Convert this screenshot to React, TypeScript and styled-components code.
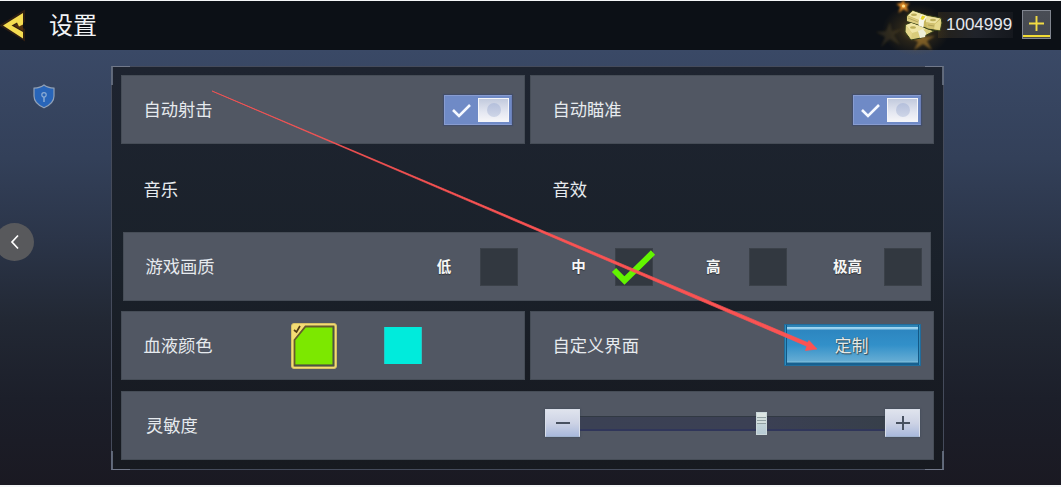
import {ReactNode} from "react";
import styled, {createGlobalStyle} from "styled-components";

const GlobalStyle = createGlobalStyle`
    * {
        box-sizing: border-box;
    }

    body {
        margin: 0;
        background: #fff;
        overflow: hidden;
    }

    svg {
        display: block;
        overflow: visible;
        flex: none;
    }
`;

const Screen = styled.div`
    position: relative;
    width: 1061px;
    height: 487px;
    padding: 1px 0 2px;
    display: flex;
    flex-direction: column;
    background: #f4f6f7;
    color: #e6eaee;
    font-family: "Noto Sans CJK SC", sans-serif;
    overflow: hidden;
`;

const Header = styled.header`
    position: relative;
    z-index: 1;
    height: 49px;
    flex: none;
    display: flex;
    align-items: center;
    padding: 0 10px 0 3px;
    background: #0c1016;
`;

const Title = styled.h1`
    margin: -3px auto 0 25px;
    font-size: 24px;
    line-height: 36px;
    font-weight: 400;
    color: #f1f3f5;
`;

const Cash = styled.svg`
    z-index: 1;
`;

const Balance = styled.div`
    width: 75px;
    height: 26px;
    margin: -2px 9px 0 -3px;
    padding-left: 8px;
    line-height: 26px;
    background: linear-gradient(90deg, #24211a, #20232a 50%, #15181e);
    font-family: "Liberation Sans", sans-serif;
    font-size: 17px;
    color: #e6e8ed;
`;

const AddButton = styled.button`
    width: 29px;
    height: 29px;
    margin-top: -2px;
    padding: 0 0 3px;
    display: grid;
    place-items: center;
    border: 1px solid #80858f;
    background: linear-gradient(#494d55, #454951 24px, #f2dc34 24px, #f2dc34 26px, #4d4b45 26px);
`;

const Body = styled.main`
    flex: 1;
    display: flex;
    align-items: flex-start;
    background: linear-gradient(#3a4966 0%, #334059 25%, #2b3549 43%, #222834 62%, #1c1f2a 80%, #1a1922 100%);
`;

const Side = styled.aside`
    width: 111px;
    padding-top: 34px;
    display: flex;
    flex-direction: column;
`;

const Shield = styled.svg`
    margin-left: 33px;
`;

const BackButton = styled.button`
    width: 39px;
    height: 38px;
    margin: 114px 0 0 -5px;
    padding: 0;
    display: grid;
    place-items: center;
    border: 0;
    border-radius: 50%;
    background: #58595c;
`;

const Panel = styled.section`
    position: relative;
    width: 833px;
    height: 404px;
    margin-top: 16px;
    padding: 8px 9px 0;
    border: 1px solid #454b5b;
    background: linear-gradient(#1e2430, #1a212a 50%, #181c24 75%, #171a20);
`;

const Corner = styled.i<{ $top?: boolean; $left?: boolean }>`
    position: absolute;
    width: 19px;
    height: 19px;
    ${({$top}) => ($top ? "top: -1px; border-top" : "bottom: -1px; border-bottom")}: 1px solid #777f90;
    ${({$left}) => ($left ? "left: -1px; border-left" : "right: -1px; border-right")}: 2px solid #666f80;
    opacity: 0.9;
`;

const Rows = styled.div`
    width: 813px;
    display: grid;
    grid-template-rows: 69px 68px 69px 69px 70px;
    row-gap: 10px;

    & > :nth-child(2) {
        padding-top: 3px;
    }

    & > :last-child {
        margin-top: 1px;
    }
`;

const Pair = styled.div`
    display: grid;
    grid-template-columns: 404px 404px;
    gap: 5px;
`;

const Card = styled.div<{ $plain?: boolean; $inset?: boolean; $indent?: number }>`
    display: flex;
    align-items: center;
    padding-left: ${({$indent = 22.5}) => $indent}px;
    margin: ${({$inset}) => ($inset ? "0 3px 0 2px" : "0")};
    background: ${({$plain}) => ($plain ? "none" : "#515763")};
    box-shadow: ${({$plain}) => ($plain ? "none" : "inset 0 0 0 1px #464d57")};
`;

const Label = styled.span`
    margin: -2px auto 0 0;
    font-size: 17.3px;
    line-height: 26px;
    white-space: nowrap;
`;

const Switch = styled.div`
    width: 68px;
    height: 30px;
    margin-right: 13px;
    padding: 2px;
    display: flex;
    align-items: center;
    justify-content: space-between;
    border: 1px solid #889cd0;
    border-right-color: #6c80b9;
    background: #6f8ac6;
    box-shadow: 0 0 1px 1px #434e69;
`;

const Knob = styled.div`
    width: 31px;
    height: 24px;
    display: grid;
    place-items: center;
    border: 1px solid #f5f6fa;
    background: linear-gradient(#c2cadd, #e4e7f1 60%, #f5f5f8);

    &::after {
        content: "";
        width: 14px;
        height: 14px;
        border-radius: 50%;
        background: linear-gradient(#b4bfdb, #ced5e7);
    }
`;

const Quality = styled.div<{ $gap?: number }>`
    display: flex;
    align-items: center;
    justify-content: flex-end;
    width: 134.6px;
    gap: ${({$gap = 29}) => $gap}px;
    color: #f6f7f6;
    font-size: 14.5px;
    font-weight: 700;
    text-shadow: 0 1px 1px #30343a;
`;

const QualityName = styled.span`
    margin-top: -2px;
`;

const Qualities = styled.div`
    display: flex;
    margin-right: 9px;
`;

const CheckBox = styled.div`
    width: 38px;
    height: 38px;
    border: 1px solid #3b4149;
    background: #323840;
`;

const Swatches = styled.div`
    display: flex;
    align-items: center;
    gap: 47px;
    margin-right: 103px;
`;

const Swatch = styled.div`
    width: 38px;
    height: 37px;
    border: solid #27c5c5;
    border-width: 0 1px;
    background: #00ebdc;
`;

const CustomButton = styled.button`
    width: 137px;
    height: 42px;
    margin: -1px 13px 0 0;
    padding: 0;
    border: 1px solid #216c9b;
    background: linear-gradient(#2d83b5 2px, #a5d8f2 2px, #91cbea 4px, #2d86c0 5px, #3290c9 50%, #65acd3 36px, #84c4e0 37px, #17608f 38px);
    box-shadow: inset 1px 0 #2e8dbd, inset -1px 0 #2e8dbd, inset 2px 0 #145885, inset -2px 0 #145885;
    color: #e5e9e7;
    font: 17px/38px "Noto Sans CJK SC", sans-serif;
    text-shadow: 0 0 1px #263c49, 1px 1px 1px #334b59;
`;

const ButtonText = styled.span`
    display: block;
    margin-top: -1px;
    padding-right: 2px;
`;

const Slider = styled.div`
    display: flex;
    align-items: center;
    margin: -5px 14px 0 0;
`;

const StepButton = styled.button`
    width: 35px;
    height: 28px;
    padding: 0;
    display: grid;
    place-items: center;
    border: 1px solid #d9dee9;
    border-bottom-color: #a0b3cf;
    background: linear-gradient(#dfe3ed, #cdd3e5 50%, #a9b9dc);
    box-shadow: 0 0 2px #394455;
`;

const Track = styled.div`
    width: 305px;
    height: 15px;
    display: flex;
    align-items: center;
    border-top: 1px solid #313943;
    border-bottom: 2px solid #30365a;
    background: linear-gradient(90deg, #3b4154, #3b4054 60%, #373f4a);
`;

const Thumb = styled.div`
    width: 11px;
    height: 23px;
    margin: 2px 0 0 176px;
    flex: none;
    border: 1px solid #cbd8db;
    background: linear-gradient(#dce5e3 4px, #91a0a3 4px 5px, #d2dedd 5px 7px, #91a0a3 7px 8px, #d2dedd 8px 10px, #91a0a3 10px 11px, #c3d4d9 11px, #b6cad4);
`;

const Arrow = styled.svg`
    position: absolute;
    z-index: 2;
    left: 0;
    top: 0;
    pointer-events: none;
`;

function HeaderBackIcon() {
  return (
    <svg width="21" height="26" viewBox="0 0 21 26">
      <path d="M20 0 0 12.5 20 25V17L13 12.5 20 8Z" fill="#bd5b0d" stroke="#7d3e0c" strokeWidth="4" opacity=".3"/>
      <path d="M20 7 11 12.5 20 18Z" fill="#52300e"/>
      <path d="M20 0 0 12.5 20 25.5V19L8.5 12.5 14 9.5 16 13.5 20 11.5Z" fill="#f5dc51"/>
    </svg>
  );
}

function ShieldIcon() {
  return (
    <Shield width="22" height="25" viewBox="0 0 22 25">
      <path d="M11 1C8 3.5 4.5 4 1 4.2V12c0 5.7 4.2 9.3 10 11.8 5.8-2.5 10-6.1 10-11.8V4.2C17.5 4 14 3.5 11 1Z" fill="#2865b9" stroke="#91a1b7" strokeWidth="1.2"/>
      <circle cx="11" cy="10.8" r="2.2" fill="none" stroke="#8aabd4" strokeWidth="1.2"/>
      <path d="M11 13v5" stroke="#8aabd4" strokeWidth="1.5"/>
    </Shield>
  );
}

function CashIcon() {
  return (
    <Cash width="38" height="30" viewBox="0 0 38 30">
      <defs>
        <radialGradient id="glow">
          <stop offset="0" stopColor="#a9872f" stopOpacity=".65"/>
          <stop offset=".5" stopColor="#795b20" stopOpacity=".25"/>
          <stop offset="1" stopColor="#795b20" stopOpacity="0"/>
        </radialGradient>
        <filter id="soft" x="-50%" y="-50%" width="200%" height="200%">
          <feGaussianBlur stdDeviation="1"/>
        </filter>
      </defs>
      <ellipse cx="13" cy="19" rx="34" ry="26" fill="url(#glow)"/>
      <g filter="url(#soft)">
        <path d="m0-6 1.500 4L6-3 3 1l2 5-5-3-5 4 2-6-4-3 5-1Z" transform="translate(.5 -5)" fill="#e58d25"/>
        <path d="m0-13 2 9 10-2-8 6 6 10-10-6-9 8 4-10-9-5 10-1Z" transform="translate(-13 24)" fill="#8a6c30" opacity=".22"/>
        <path d="m0-12 2 9 10-1-8 5 5 9-9-6-9 6 4-8-7-5 9-1Z" transform="translate(20 29)" fill="#bd8931" opacity=".55"/>
      </g>
      <circle cx=".5" cy="-5" r="1.6" fill="#ffe08a"/>
      <path d="M2.300 14 9 11l14 6 8 3-13 7-10 2-6-8Z" fill="#d9cc7b" stroke="#343e1a"/>
      <path d="m3 14 6-2 14 6-14 4Z" fill="#f0e6a6"/>
      <path d="m3 15 6 7-1 6-5-7Z" fill="#e4d68a"/>
      <path d="m15 20 5-2 3 4-1 4-5 1Z" fill="#efefd8"/>
      <path d="M4 4.500 9.500-.5 23 4l15 3 1 5-2 8-12-2-9-4L4 10Z" fill="#c8b75f" stroke="#343e1a"/>
      <path d="M5 4.500 10 0l13 4.500-6 5Z" fill="#f1e7a8"/>
      <path d="m4 5 13 5v4L4 10Z" fill="#dccd80"/>
      <path d="m23 5 14 2.500-5 5-9-1Z" fill="#eee3a2"/>
      <path d="m23 11 9 2-1 5-7-1Z" fill="#d1c170"/>
      <path d="m32 13 6-5-1 11-6-1Z" fill="#e6d98c"/>
      <path d="m18 3.500 6 2-3 5-.5 6-5-2 .5-5.500Z" fill="#f7f6e7"/>
      <path d="m19 4.500 3.500 1-2.500 3.500-2.500-1Z" fill="#e9d827"/>
      <ellipse cx="11" cy="3.800" rx="3" ry="1.300" fill="#bbad58"/>
      <ellipse cx="30" cy="9" rx="3" ry="1.300" fill="#bbad58"/>
      <ellipse cx="10" cy="16.500" rx="3" ry="1.300" fill="#bbad58"/>
      <path d="m5 7 10 4M25 14l6 1" stroke="#a2934c" strokeWidth=".7"/>
    </Cash>
  );
}

function Plus({color, size, stroke}: { color: string; size: number; stroke: number }) {
  return (
    <svg width={size} height={size} viewBox="0 0 14 14">
      <path d="M7 0v14M0 7h14" stroke={color} strokeWidth={stroke}/>
    </svg>
  );
}

function Toggle() {
  return (
    <Switch>
      <svg width="30" height="24" viewBox="0 0 30 24">
        <path d="m6 12 6 6L23 7" fill="none" stroke="#f5f8ff" strokeWidth="2.6"/>
      </svg>
      <Knob/>
    </Switch>
  );
}

function SelectedSwatch() {
  return (
    <svg width="46" height="46" viewBox="0 0 46 46">
      <rect x=".5" y=".5" width="45" height="45" rx="2.5" fill="#f4dd74" stroke="#d5bf64"/>
      <path d="M14.5 3.5h28v39h-39V17Z" fill="#7ce800" stroke="#655a2c" strokeWidth="1.8"/>
      <path d="M3.5 42.5h39v-39" fill="none" stroke="#4a5446" strokeWidth="1.5"/>
      <path d="m3 7 2.5 2L9 3" fill="none" stroke="#533e16" strokeWidth="1.7"/>
    </svg>
  );
}

function QualityOption({label, checked, gap}: { label: ReactNode; checked?: boolean; gap?: number }) {
  return (
    <Quality $gap={gap}>
      <QualityName>{label}</QualityName>
      <CheckBox>
        {checked && (
          <svg width="36" height="36" viewBox="0 0 36 36">
            <path d="m-2 21 10.5 10.5L37 3.500" fill="none" stroke="#62f500" strokeWidth="6"/>
          </svg>
        )}
      </CheckBox>
    </Quality>
  );
}

export default function App() {
  return (
    <>
      <GlobalStyle/>
      <Screen>
        <Header>
          <HeaderBackIcon/>
          <Title>设置</Title>
          <CashIcon/>
          <Balance>1004999</Balance>
          <AddButton>
            <Plus color="#f1db43" size={15} stroke={1.8}/>
          </AddButton>
        </Header>
        <Body>
          <Side>
            <ShieldIcon/>
            <BackButton>
              <svg width="8" height="14" viewBox="0 0 8 14">
                <path d="M7 .5 1 7l6 6.5" fill="none" stroke="#fff" strokeWidth="1.7"/>
              </svg>
            </BackButton>
          </Side>
          <Panel>
            <Corner $top $left/>
            <Corner $top/>
            <Corner $left/>
            <Corner/>
            <Rows>
              <Pair>
                <Card><Label>自动射击</Label><Toggle/></Card>
                <Card><Label>自动瞄准</Label><Toggle/></Card>
              </Pair>
              <Pair>
                <Card $plain><Label>音乐</Label></Card>
                <Card $plain><Label>音效</Label></Card>
              </Pair>
              <Card $inset>
                <Label>游戏画质</Label>
                <Qualities>
                  <QualityOption label="低"/>
                  <QualityOption label="中" checked/>
                  <QualityOption label="高"/>
                  <QualityOption label="极高" gap={22}/>
                </Qualities>
              </Card>
              <Pair>
                <Card>
                  <Label>血液颜色</Label>
                  <Swatches>
                    <SelectedSwatch/>
                    <Swatch/>
                  </Swatches>
                </Card>
                <Card>
                  <Label>自定义界面</Label>
                  <CustomButton><ButtonText>定制</ButtonText></CustomButton>
                </Card>
              </Pair>
              <Card $indent={25}>
                <Label>灵敏度</Label>
                <Slider>
                  <StepButton>
                    <svg width="14" height="2"><path d="M0 1h14" stroke="#485160" strokeWidth="2"/></svg>
                  </StepButton>
                  <Track><Thumb/></Track>
                  <StepButton>
                    <Plus color="#485160" size={14} stroke={2}/>
                  </StepButton>
                </Slider>
              </Card>
            </Rows>
          </Panel>
        </Body>
        <Arrow width="1061" height="487" viewBox="0 0 1061 487">
          <path d="m212 91 595.5 251.500 1.500-2L817 349l-11.500 1.500 1.300-4.300Z" fill="#fb5353" stroke="#fb5353" strokeWidth=".7"/>
        </Arrow>
      </Screen>
    </>
  );
}
